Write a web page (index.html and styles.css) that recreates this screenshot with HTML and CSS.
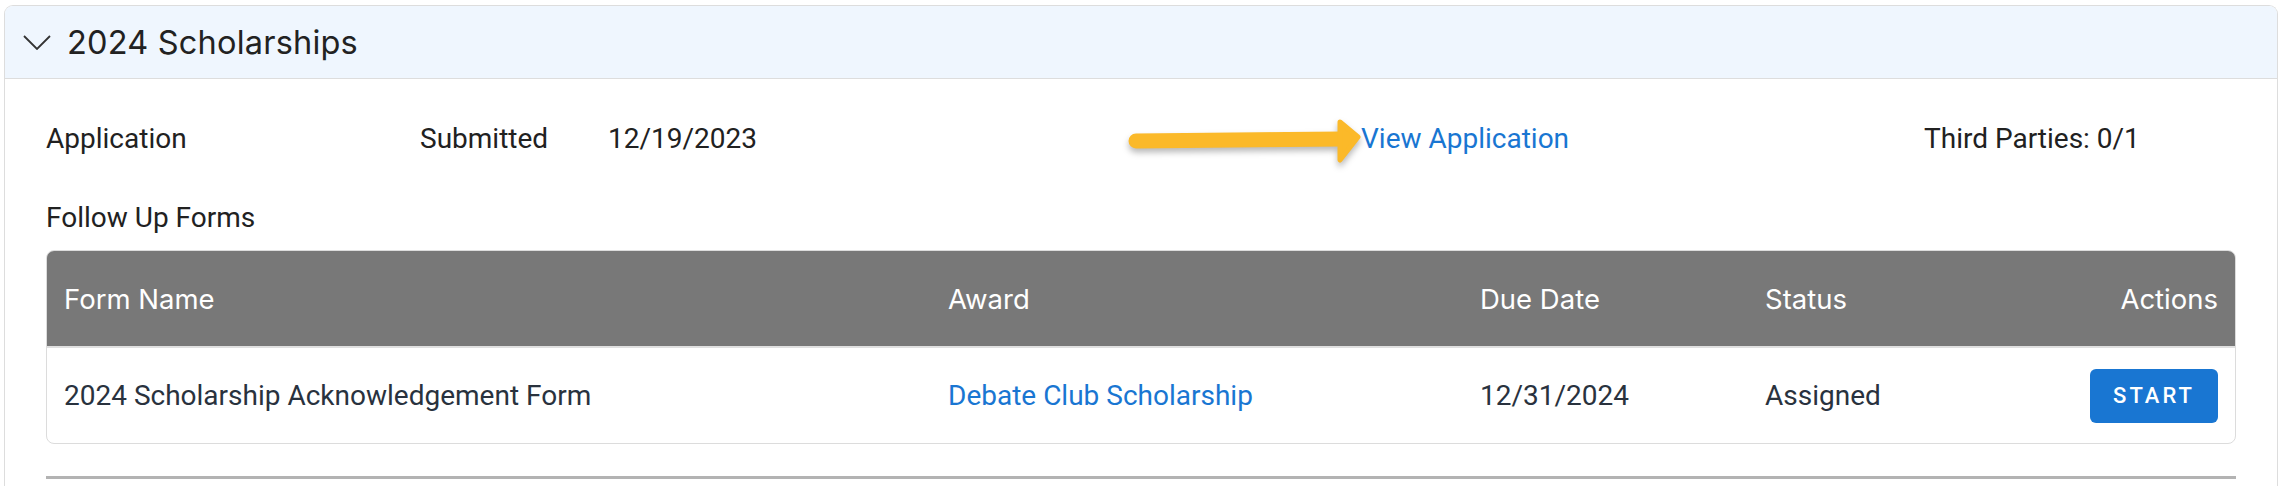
FILE: index.html
```html
<!DOCTYPE html>
<html lang="en">
<head>
<meta charset="utf-8">
<title>2024 Scholarships</title>
<link rel="stylesheet" href="styles.css">
</head>
<body>
<section class="card">
  <header class="card-header">
    <svg class="chevron" width="28" height="15" viewBox="0 0 28 15" aria-hidden="true">
      <polyline points="1,1 14,14 27,1" fill="none" stroke="#333" stroke-width="1.8"/>
    </svg>
    <h2 class="card-title">2024 Scholarships</h2>
  </header>
  <div class="card-body">
    <div class="app-row">
      <span class="cell c-label">Application</span>
      <span class="cell c-status">Submitted</span>
      <span class="cell c-date">12/19/2023</span>
      <span class="cell c-link">
        <svg class="arrow" width="237" height="56" viewBox="0 0 237 56" aria-hidden="true">
          <g fill="#fbb929" stroke="#fbb929" stroke-linecap="round" stroke-linejoin="round">
            <line x1="12" y1="29" x2="218" y2="27" stroke-width="15"/>
            <polygon points="216,10 234,25 216,48" stroke-width="5"/>
          </g>
        </svg><a class="view-link" href="#">View Application</a>
      </span>
      <span class="cell c-third">Third Parties: 0/1</span>
    </div>
    <div class="section-label">Follow Up Forms</div>
    <div class="forms-table">
      <div class="t-row t-head">
        <div class="t-cell">Form Name</div>
        <div class="t-cell">Award</div>
        <div class="t-cell">Due Date</div>
        <div class="t-cell">Status</div>
        <div class="t-cell t-actions">Actions</div>
      </div>
      <div class="t-row t-body">
        <div class="t-cell">2024 Scholarship Acknowledgement Form</div>
        <div class="t-cell"><a class="award-link" href="#">Debate Club Scholarship</a></div>
        <div class="t-cell">12/31/2024</div>
        <div class="t-cell">Assigned</div>
        <div class="t-cell t-actions"><button class="start-btn" type="button">START</button></div>
      </div>
    </div>
    <div class="divider"></div>
  </div>
</section>
</body>
</html>
```
FILE: styles.css
```css
html, body {
  margin: 0;
  padding: 0;
  background: #ffffff;
}

body {
  font-family: Roboto, "Liberation Sans", sans-serif;
  color: #212121;
  overflow: hidden;
}

.card {
  margin: 5px 4px 0 4px;
  border: 1px solid #dddddd;
  border-bottom: none;
  border-radius: 9px 9px 0 0;
  min-height: 600px;
  overflow: hidden;
}

.card-header {
  display: flex;
  align-items: center;
  height: 72px;
  padding-left: 18px;
  background: #eff6fe;
  border-bottom: 1px solid #dddddd;
}

.chevron {
  flex: none;
  margin-right: 16px;
}

.card-title {
  margin: 0;
  font-family: Inter, "Noto Sans", sans-serif;
  font-weight: 400;
  font-size: 32.5px;
  color: #222222;
  letter-spacing: 0.2px;
}

.card-body {
  padding: 0 41px;
}

.app-row {
  display: flex;
  align-items: center;
  height: 40px;
  margin-top: 39px;
  font-size: 28px;
}

.cell {
  white-space: nowrap;
}

.c-label { width: 374px; }
.c-status { width: 188px; }
.c-date { width: 516px; }
.c-link {
  display: flex;
  align-items: center;
  width: 800px;
}

.arrow {
  flex: none;
  margin-top: 4px;
  filter: drop-shadow(0 4px 3px rgba(0, 0, 0, 0.28));
}

.view-link {
  color: #1976d2;
  text-decoration: none;
}

.section-label {
  margin-top: 40px;
  height: 40px;
  line-height: 40px;
  font-size: 28px;
  color: #212121;
}

.forms-table {
  margin-top: 12px;
  border: 1px solid #dcdcdc;
  border-radius: 8px;
  overflow: hidden;
}

.t-row {
  display: grid;
  grid-template-columns: 884px 532px 285px 1fr auto;
  align-items: center;
}

.t-head {
  height: 95px;
  background: #787878;
  border-bottom: 2px solid #e0e0e0;
  color: #ffffff;
  font-family: Inter, "Noto Sans", sans-serif;
  font-size: 27.5px;
}

.t-body {
  height: 95px;
  color: #29323e;
  font-size: 28px;
}

.t-cell {
  padding: 0 17px;
  white-space: nowrap;
}

.t-actions {
  text-align: right;
}

.award-link {
  color: #1976d2;
  text-decoration: none;
}

.start-btn {
  width: 128px;
  height: 54px;
  border: none;
  border-radius: 6px;
  background: #1976d2;
  color: #ffffff;
  font-family: Roboto, "Liberation Sans", sans-serif;
  font-weight: 500;
  font-size: 22px;
  letter-spacing: 3px;
  padding: 0;
  cursor: pointer;
}

.divider {
  margin-top: 32px;
  height: 3px;
  background: #b3b3b3;
}
```
